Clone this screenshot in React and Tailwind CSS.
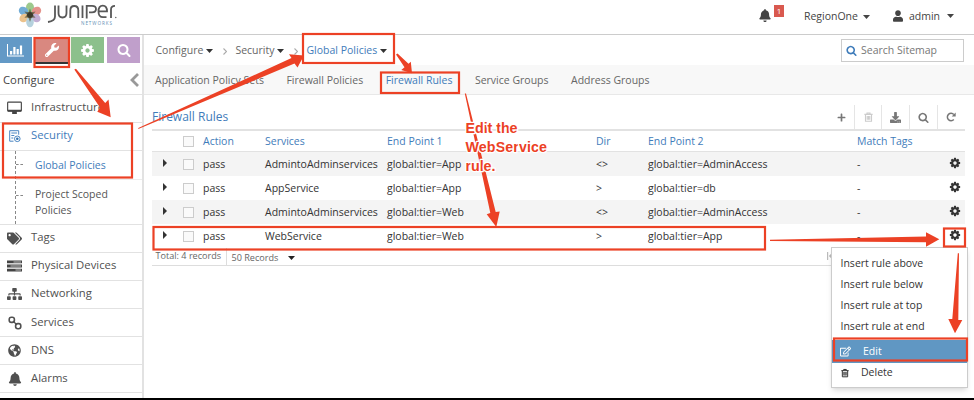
import React from "react";
import { FaWrench, FaUser, FaBell, FaTags, FaSitemap, FaRegEdit, FaDownload, FaPlus, FaGlobeAmericas } from "react-icons/fa";

const COG = "M1152 896q0-106-75-181t-181-75-181 75-75 181 75 181 181 75 181-75 75-181zm512-109v222q0 12-8 23t-20 13l-185 28q-19 54-39 91 35 50 107 138 10 12 10 25t-9 23q-27 37-99 108t-94 71q-12 0-26-9l-138-108q-44 23-91 38-16 136-29 186-7 28-36 28h-222q-14 0-24.5-8.5t-11.5-21.5l-28-184q-49-16-90-37l-141 107q-10 9-25 9-14 0-25-11-126-114-165-168-7-10-7-23 0-12 8-23 15-21 51-66.5t54-70.5q-27-50-41-99l-183-27q-13-2-21-12.5t-8-23.5v-222q0-12 8-23t19-13l186-28q14-46 39-92-40-57-107-138-10-12-10-24 0-10 9-23 26-36 98.5-107.5t94.5-71.5q13 0 26 10l138 107q44-23 91-38 16-136 29-186 7-28 36-28h222q14 0 24.5 8.5t11.5 21.5l28 184q49 16 90 37l142-107q9-9 24-9 13 0 25 10 129 119 165 170 7 8 7 22 0 12-8 23-15 21-51 66.5t-54 70.5q26 50 41 98l183 28q13 2 21 12.5t8 23.5z";
const SEARCH = "M1216 832q0-185-131.5-316.5t-316.5-131.5-316.5 131.5-131.5 316.5 131.5 316.5 316.5 131.5 316.5-131.5 131.5-316.5zm512 832q0 52-38 90t-90 38q-54 0-90-38l-343-342q-179 124-399 124-143 0-273.5-55.5t-225-150-150-225-55.5-273.5 55.5-273.5 150-225 225-150 273.5-55.5 273.5 55.5 225 150 150 225 55.5 273.5q0 220-124 399l343 343q37 37 37 90z";

function Glyph({ d, className }) {
  return (
    <svg viewBox="0 0 1792 1792" className={className} fill="currentColor">
      <path d={d} />
    </svg>
  );
}

function Caret({ className = "" }) {
  return (
    <svg viewBox="0 0 7 4" className={`h-[4px] w-[7px] shrink-0 ${className}`} fill="currentColor">
      <path d="M0 0h7L3.5 4z" />
    </svg>
  );
}

function Crumb() {
  return (
    <svg viewBox="0 0 4 7" className="ml-[10px] mt-[2px] h-[7px] w-[4px]" fill="none" stroke="#aaa" strokeWidth="1.1">
      <path d="M.5.5l3 3-3 3" />
    </svg>
  );
}

function Trash({ className }) {
  return (
    <svg viewBox="0 0 12 13" className={className} fill="none" stroke="currentColor" strokeWidth="1.500">
      <path d="M.5 3h11M4 3V1.2h4V3M2 3v9.2h8V3M4.3 5v5.3M6 5v5.3M7.7 5v5.3" />
    </svg>
  );
}

function Logo() {
  return (
    <div className="flex items-start pl-[17px] pt-[2px]">
      <svg viewBox="0 0 26 26" className="h-[26px] w-[26px]">
        <g opacity="0.85">
          <ellipse cx="13" cy="5.5" rx="4" ry="5" fill="#8cc07a" />
          <ellipse cx="6.500" cy="9" rx="4.800" ry="4.200" fill="#5b9fd0" transform="rotate(25 6.500 9)" />
          <ellipse cx="19.500" cy="9" rx="4.800" ry="4.200" fill="#e08078" transform="rotate(-25 19.500 9)" />
          <ellipse cx="7" cy="16" rx="4.800" ry="4" fill="#e8b878" transform="rotate(-35 7 16)" />
          <ellipse cx="19" cy="16" rx="4.800" ry="4" fill="#b9a0cc" transform="rotate(35 19 16)" />
          <ellipse cx="13" cy="20" rx="3.800" ry="5.200" fill="#a9c9d8" />
        </g>
        <path d="M13 6.500l1.400 3.800 4.200-.8-2.600 3.300 2.600 3-4-.4L13 20l-1.600-4.600-4 .4 2.600-3-2.600-3.300 4.200.8z" fill="#5a5a3c" opacity=".75" />
        <circle cx="13" cy="13" r="3" fill="#3c3a2a" />
      </svg>
      <svg viewBox="0 0 74 26" className="ml-[2px] h-[26px] w-[74px]">
        <g fill="none" stroke="#585858" strokeWidth="1.800">
          <path d="M10 3.500v11q0 4.500-7 5.500" />
          <path d="M13.500 3.500V11q0 4.500 4 4.500t4-4.500V3.500" />
          <path d="M25.300 16V8.500q0-4.500 4-4.500t4 4.500V16M37.500 3.500V16" />
          <path d="M41.700 16.500V3.800h5.300q4 0 4 3.300t-4 3.300h-3" />
          <path d="M54 9.300h8q0-5.600-4.200-5.600-4.300 0-4.300 5.800 0 5.700 4.500 5.700h3.500" />
          <path d="M66 16V7.500q0-3.700 4-3.700" />
        </g>
        <circle cx="70.800" cy="15.500" r=".7" fill="#585858" />
        <text x="36" y="23" className="font-['Open_Sans',sans-serif] text-[4.600px]" fill="#5f8fb5" textLength="31">NETWORKS</text>
      </svg>
    </div>
  );
}

function BarChart() {
  return (
    <svg viewBox="0 0 18 14" className="h-[14px] w-[18px]" fill="currentColor">
      <path d="M0 1h1v11.500h16v1H0zM3 8h2.200v3.500H3zM6.300 4h2.200v7.500H6.300zM9.600 6h2.200v5.500H9.600zM12.900 2.500h2.200v9h-2.200z" />
    </svg>
  );
}

function Monitor() {
  return (
    <svg viewBox="0 0 16 14" className="h-[14px] w-4">
      <rect x=".7" y=".7" width="14.600" height="9.600" rx=".8" fill="none" stroke="#444" strokeWidth="1.200" />
      <path d="M.7 8.800h14.600v2H.7zM5.500 10.500h5v2.800h-5z" fill="#444" />
    </svg>
  );
}

function SecurityIcon() {
  return (
    <svg viewBox="0 0 12 13" className="h-[13px] w-3" fill="none" stroke="#4a86c2">
      <path d="M4.500 11.200H.7V.7h9v4M2.300 3h5.800M2.300 5.500h3M2.300 8h2" strokeWidth="1" />
      <circle cx="8.300" cy="8.800" r="2.800" />
      <circle cx="8.300" cy="8.800" r="1.300" fill="#2f6fae" stroke="none" />
    </svg>
  );
}

function Racks() {
  return (
    <svg viewBox="0 0 15 12" className="h-3 w-[15px]">
      <path d="M0 .5h15v2.800H0zM0 4.600h15v2.800H0zM0 8.700h15v2.800H0z" fill="#444" />
      <path d="M6.500 1.400H14v1H6.500zM3.500 5.500H14v1H3.500zM8.500 9.600H14v1H8.500z" fill="#bbb" />
    </svg>
  );
}

function Chain() {
  return (
    <svg viewBox="0 0 14 14" className="h-[14px] w-[14px]" fill="none" stroke="#505050" strokeWidth="1.600">
      <rect x="1.200" y="1.200" width="5.200" height="5.200" rx="2.200" />
      <rect x="7.600" y="7.600" width="5.200" height="5.200" rx="2.200" />
      <path d="M5 5l4 4" strokeWidth="1.200" />
    </svg>
  );
}

function MenuRow({ icon, label, active }) {
  return (
    <div className={`flex h-[28.100px] items-center border-b border-[#e2e2e2] pl-[7px] ${active ? "text-[#3f7cba]" : "text-[#505050]"}`}>
      <span className="flex w-[15px] justify-center">{icon}</span>
      <span className="mb-[1px] ml-[9px] text-[11.300px]">{label}</span>
    </div>
  );
}

function Sidebar() {
  return (
    <aside className="flex w-[144px] shrink-0 flex-col border-r-2 border-[#e2e2e2] bg-white">
      <div className="flex h-[31px] gap-[3px] pt-[2px] text-white">
        <span className="flex h-[26px] w-8 items-center justify-center bg-[#6399c6]"><BarChart /></span>
        <span className="flex h-[27px] w-[33px] items-center justify-center border-b-2 border-[#333] bg-[#d98880]"><FaWrench className="h-[14px] w-[14px]" /></span>
        <span className="flex h-[26px] w-[33px] items-center justify-center bg-[#8cc08c]"><Glyph d={COG} className="h-[15px] w-[15px]" /></span>
        <span className="flex h-[26px] w-[33px] items-center justify-center bg-[#c09fcb]"><Glyph d={SEARCH} className="h-[14px] w-[14px]" /></span>
      </div>
      <div className="flex h-[28.500px] items-center justify-between border-b border-[#e2e2e2] pl-[3px] pr-[3px] pt-[1px] text-[11.300px] text-[#444]">
        <span>Configure</span>
        <svg viewBox="0 0 9 14" className="h-[14px] w-[9px]" fill="none" stroke="#999" strokeWidth="2.800"><path d="M8 1L2 7l6 6" /></svg>
      </div>
      <MenuRow icon={<Monitor />} label="Infrastructure" />
      <MenuRow icon={<SecurityIcon />} label="Security" active />
      <div className="ml-[15px] h-[73px] border-l border-dashed border-[#888] text-[10.500px] text-[#555]">
        <div className="flex h-[29px] items-center border-b border-[#ececec]">
          <span className="w-[7px] border-t border-dashed border-[#888]" />
          <span className="ml-3 mt-[3px] text-[#3f7cba]">Global Policies</span>
        </div>
        <div className="flex">
          <span className="mt-[15px] w-[7px] border-t border-dashed border-[#888]" />
          <span className="ml-3 mt-[6px] leading-4">Project Scoped<br />Policies</span>
        </div>
      </div>
      <div className="border-t border-[#e2e2e2]" />
      <MenuRow icon={<FaTags className="h-[15px] w-[15px]" />} label="Tags" />
      <MenuRow icon={<Racks />} label="Physical Devices" />
      <MenuRow icon={<FaSitemap className="h-[14px] w-[15px]" />} label="Networking" />
      <MenuRow icon={<Chain />} label="Services" />
      <MenuRow icon={<FaGlobeAmericas className="h-[13px] w-[13px]" />} label="DNS" />
      <MenuRow icon={<FaBell className="h-[14px] w-[14px]" />} label="Alarms" />
    </aside>
  );
}

const COLS = "grid grid-cols-[15.500px_26px_56.500px_122px_209px_52px_209px_92px_1fr] items-center";

const RULES = [
  ["AdmintoAdminservices", "global:tier=App", "<>", "global:tier=AdminAccess"],
  ["AppService", "global:tier=App", ">", "global:tier=db"],
  ["AdmintoAdminservices", "global:tier=Web", "<>", "global:tier=AdminAccess"],
  ["WebService", "global:tier=Web", ">", "global:tier=App"],
];

function Box() {
  return <span className="mr-[-0.500px] h-[11px] w-[11px] border border-[#ccc] bg-[#fafafa]" />;
}

function RuleTable() {
  return (
    <div className="ml-[7.500px] w-[813.500px] text-[10.500px]">
      <div className={`${COLS} h-[23px] border-b border-t-2 border-[#e2e2e2] pt-[1.500px] text-[#3f7cba]`}>
        <span />
        <span className="flex justify-end"><Box /></span>
        <span className="pl-[10px]">Action</span>
        <span className="pl-[15.500px]">Services</span>
        <span className="pl-[15.500px]">End Point 1</span>
        <span className="pl-[15.500px]">Dir</span>
        <span className="pl-[15.500px]">End Point 2</span>
        <span className="pl-[15.500px]">Match Tags</span>
        <span />
      </div>
      {RULES.map(([service, from, dir, to], i) => (
        <div key={i} className={`${COLS} h-[24.100px] pt-[1px] text-[#333] ${i % 2 ? "bg-white" : "bg-[#f4f4f4]"}`}>
          <svg viewBox="0 0 4 8" className="mb-[4px] ml-auto h-2 w-[4px]" fill="#333"><path d="M0 0l4 4-4 4z" /></svg>
          <span className="flex justify-end"><Box /></span>
          <span className="pl-[10px]">pass</span>
          <span className="pl-[15.500px]">{service}</span>
          <span className="pl-[15.500px]">{from}</span>
          <span className="pl-[15.500px]">{dir}</span>
          <span className="pl-[15.500px]">{to}</span>
          <span className="pl-[15.500px]">-</span>
          <Glyph d={COG} className="mb-[3px] ml-[15px] h-[12px] w-[12px]" />
        </div>
      ))}
      <div className="flex h-[18px] border-b border-[#ddd] text-[9.100px] text-[#666]">
        <span className="ml-1 w-[70px] whitespace-nowrap leading-4">Total: 4 records</span>
        <span className="flex items-center gap-[10px] border-l border-[#ddd] pl-[5px] pt-[2px]">50 Records <Caret className="text-[#222]" /></span>
        <svg viewBox="0 0 6 8" className="ml-auto mr-[132px] mt-1 h-2 w-[6px]" fill="#bbb"><path d="M0 0h1.200v8H0zM6 0v8L1.800 4z" /></svg>
      </div>
    </div>
  );
}

function ContextMenu() {
  return (
    <div className="absolute left-[831px] top-[247px] h-[141px] w-[137px] border border-[#ccc] bg-white pt-[5.500px] text-[10.500px] text-[#333] shadow-md">
      {["above", "below", "at top", "at end"].map((place) => (
        <div key={place} className="flex h-[20.900px] items-center pl-[8.500px]">Insert rule {place}</div>
      ))}
      <div className="mt-[2.500px] flex h-[23px] items-center bg-[#6097c3] pl-[8px] pt-[2px] text-white">
        <FaRegEdit className="mb-[1px] h-[11px] w-[11px]" />
        <span className="ml-[12px]">Edit</span>
      </div>
      <div className="flex h-[20px] items-center pl-[8.500px]">
        <Trash className="h-[10px] w-[8px]" />
        <span className="ml-[12.500px]">Delete</span>
      </div>
    </div>
  );
}

function Annotations() {
  return (
    <svg viewBox="0 0 974 400" className="absolute left-0 top-0 h-[400px] w-[974px]">
      <g fill="none" stroke="#ec4125" strokeWidth="2.200">
        <rect x="34.500" y="38" width="34.500" height="29" />
        <rect x="3" y="123.500" width="129" height="54" />
        <rect x="303" y="34" width="91" height="29" />
        <rect x="381" y="72.500" width="78" height="20.500" />
        <rect x="153.500" y="227" width="611.500" height="22.500" />
        <rect x="944" y="228.500" width="21" height="18" />
        <rect x="834" y="338.500" width="133" height="22" />
      </g>
      <g fill="#ec4125">
        <path d="M74.300 69.400l1.700-.6L105.200 103l3.300-3.500 2.200 17.800-13.400-5.500 2.700-4.300z" />
        <path d="M138.300 129v-1L291.500 58l-2.500-3.700 15 1.200-6.500 12-3-4z" />
        <path d="M396 54.500l1.500-1 11 10.300 2.300-2.100 1.200 11.600-10.700-3.300 3.200-2.700z" />
        <path d="M464.800 93.500h1.200L495.700 212l4-.5-3.400 15.500-9.600-12.700 3.600-1.300z" />
        <path d="M770 239.700L926 236.500v-4.200l13.300 7-13.300 7.400v-4.400L770 241z" />
        <path d="M957.800 253.300h1.200L958.300 320h4l-7.300 13.300-6.700-14.300h4z" />
      </g>
      <g className="font-['Liberation_Sans',Arial,sans-serif] text-[14.300px] font-bold" fill="#ec4125" stroke="#fff" strokeWidth="2.500" paintOrder="stroke" strokeLinejoin="round">
        <text x="465.500" y="133" textLength="52">Edit the</text>
        <text x="465.500" y="151.700" textLength="81.500">WebService</text>
        <text x="465.500" y="170.500" textLength="30">rule.</text>
      </g>
    </svg>
  );
}

export default function App() {
  return (
    <div className="relative flex h-[400px] w-[974px] flex-col overflow-hidden bg-white font-['Open_Sans',sans-serif] text-[10.500px] text-[#444]">
      <header className="flex h-[35px] shrink-0 items-start justify-between border-b border-[#ccc]">
        <Logo />
        <div className="flex h-[33px] items-center pr-5 text-[#444]">
          <FaBell className="mb-[2px] h-[13px] w-3" />
          <span className="mb-[12px] ml-[3px] flex h-3 w-[10px] items-center justify-center bg-[#d9594f] text-[8px] text-white">1</span>
          <span className="ml-5 mt-[1px]">RegionOne</span>
          <Caret className="ml-[5px]" />
          <FaUser className="mb-[1px] ml-[23px] h-[12px] w-[10px]" />
          <span className="ml-[6px] mt-[1px]">admin</span>
          <Caret className="mb-[1px] ml-[7px]" />
        </div>
      </header>
      <div className="flex h-[363px] shrink-0">
        <Sidebar />
        <main className="flex min-w-0 flex-1 flex-col">
          <div className="flex h-[30px] items-center pl-[11.500px] pt-[1px] text-[#666]">
            <span>Configure</span><Caret className="ml-[3px] text-[#333]" />
            <Crumb />
            <span className="ml-2">Security</span><Caret className="ml-[3px] text-[#333]" />
            <Crumb />
            <span className="ml-2 text-[#3f7cba]">Global Policies</span><Caret className="ml-[3px] text-[#333]" />
            <span className="mb-[1px] ml-auto mr-[10px] flex h-[23px] w-[123px] items-center border border-[#ccc] pl-1 text-[#777]">
              <Glyph d={SEARCH} className="mr-[4px] h-[11px] w-[11px] text-[#3f7cba]" /><span className="mt-[1px]">Search Sitemap</span>
            </span>
          </div>
          <nav className="flex h-[30px] items-center gap-[22.500px] border-b border-[#e8e8e8] bg-[#f8f8f8] pl-[11px] pt-[3.500px] text-[#666]">
            <span>Application Policy Sets</span>
            <span>Firewall Policies</span>
            <span className="text-[#3f7cba]">Firewall Rules</span>
            <span>Service Groups</span>
            <span>Address Groups</span>
          </nav>
          <div className="flex h-[34px] items-end pl-[8px] pr-[10px]">
            <h1 className="mb-[3px] text-[12px] text-[#3f7cba]">Firewall Rules</h1>
            <div className="ml-auto flex h-6 text-[#777]">
              <span className="flex w-[26px] items-center justify-center"><FaPlus className="h-[9px] w-[9px]" /></span>
              <span className="flex w-[27px] items-center justify-center border-l border-[#e5e5e5] text-[#ccc]"><Trash className="h-[10px] w-[9px]" /></span>
              <span className="flex w-[28px] items-center justify-center border-l border-[#e5e5e5]"><FaDownload className="h-[11px] w-[11px]" /></span>
              <span className="flex w-[28px] items-center justify-center border-l border-[#e5e5e5]"><Glyph d={SEARCH} className="h-[11px] w-[11px]" /></span>
              <span className="flex w-[27px] items-center justify-center border-l border-[#e5e5e5]">
                <svg viewBox="0 0 10 10" className="h-[10px] w-[10px]"><path d="M7.800 7.500A3.700 3.700 0 1 1 7.800 2.500" fill="none" stroke="currentColor" strokeWidth="1.500" /><path d="M9.700.5v4H5.700z" fill="currentColor" /></svg>
              </span>
            </div>
          </div>
          <RuleTable />
        </main>
      </div>
      <div className="h-[2px] shrink-0 bg-black" />
      <ContextMenu />
      <Annotations />
    </div>
  );
}
